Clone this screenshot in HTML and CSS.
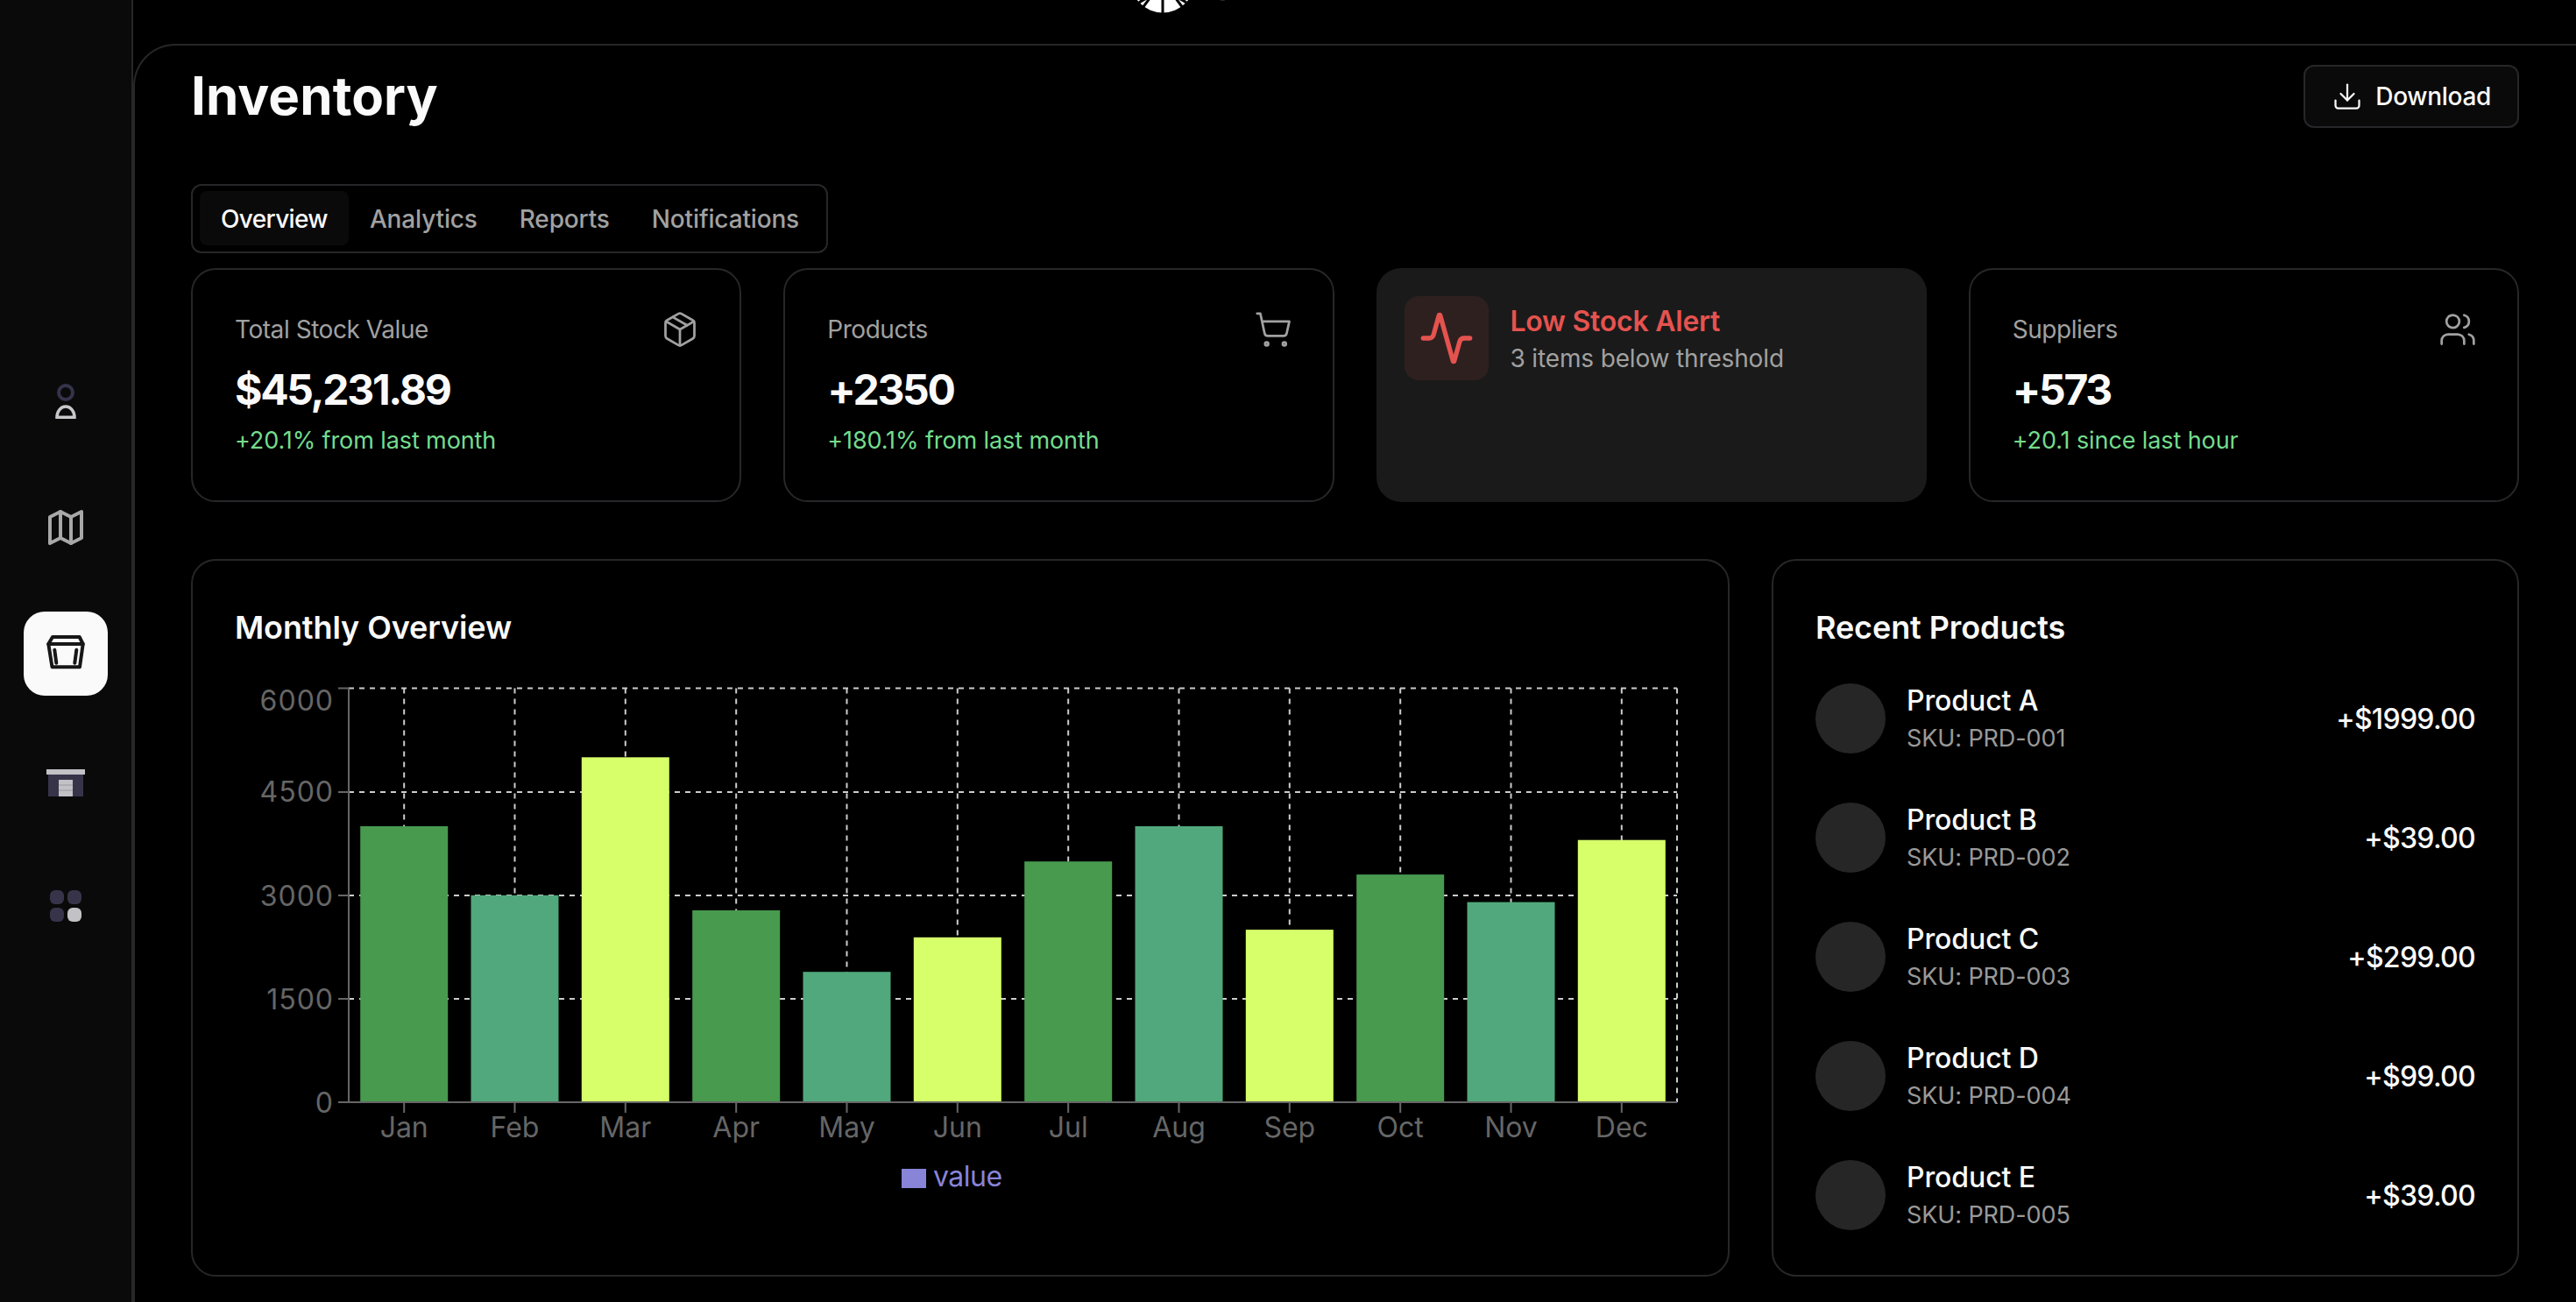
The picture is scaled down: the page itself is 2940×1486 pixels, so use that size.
FILE: index.html
```html
<!DOCTYPE html>
<html lang="en">
<head>
<meta charset="utf-8">
<title>Inventory</title>
<link rel="stylesheet" href="styles.css">
</head>
<body>
<div class="app">
  <aside class="sidebar">
    <nav class="nav">
      <a class="nav-item">
        <svg class="nav-icon" viewBox="0 0 48 48"><circle class="d-stroke" cx="24" cy="14" r="8"/><path class="l-stroke" d="M14 42.2H34C34 36 30 30 24 30S14 36 14 42.2Z"/></svg>
      </a>
      <a class="nav-item">
        <svg class="nav-icon map-icon" viewBox="0 0 24 24"><path d="M3 6l6-3 6 3 6-3v15l-6 3-6-3-6 3z"/><path d="M9 3v15"/><path d="M15 6v15"/></svg>
      </a>
      <a class="nav-item active">
        <svg class="nav-icon basket-icon" viewBox="0 0 48 48"><path d="M9 5H39.7L43.7 13L40 39.3H8.5L4.3 13Z"/><path d="M4.3 13H43.7"/><path d="M11.3 19.7L13.3 34.7"/><path d="M36.3 19.7L34.3 34.7"/></svg>
      </a>
      <a class="nav-item">
        <svg class="nav-icon" viewBox="0 0 48 48"><rect class="l-fill" x="2" y="12" width="44" height="6"/><rect class="d-fill" x="4" y="18" width="40" height="25"/><rect class="l-fill" x="16" y="24" width="16" height="19"/><path class="door-line" d="M16 30H32M16 36H32"/></svg>
      </a>
      <a class="nav-item">
        <svg class="nav-icon" viewBox="0 0 48 48"><rect class="d-fill" x="6" y="6" width="16" height="16" rx="6"/><rect class="d-fill" x="26" y="6" width="16" height="16" rx="6"/><rect class="d-fill" x="6" y="26" width="16" height="16" rx="6"/><rect class="l-fill" x="26" y="26" width="16" height="16" rx="6"/></svg>
      </a>
    </nav>
  </aside>
  <div class="main">
    <header class="topbar">
      <svg class="logo" viewBox="0 0 74 74">
        <circle class="logo-disc" cx="37" cy="37" r="36.5"/>
        <path class="logo-cuts" d="M37 37V74M37 37L14 68M37 37L60 68M37 37L2 52M37 37L72 52M10 62A36 24 0 0 1 64 62"/>
      </svg>
      <span class="brand">SHIPMONKE</span>
    </header>
    <main class="panel">
      <div class="title-row">
        <h1 class="title">Inventory</h1>
        <button class="download">
          <svg class="dl-icon" viewBox="0 0 24 24"><path d="M21 15v4a2 2 0 0 1-2 2H5a2 2 0 0 1-2-2v-4"/><path d="M7 10l5 5 5-5"/><path d="M12 15V3"/></svg>
          <span>Download</span>
        </button>
      </div>
      <div class="tabs">
        <span class="tab on">Overview</span>
        <span class="tab">Analytics</span>
        <span class="tab">Reports</span>
        <span class="tab">Notifications</span>
      </div>
      <section class="stats">
        <article class="stat">
          <div class="stat-head"><span class="stat-label">Total Stock Value</span>
            <svg class="stat-icon" viewBox="0 0 24 24"><path d="M7.5 4.27l9 5.15"/><path d="M21 8a2 2 0 0 0-1-1.73l-7-4a2 2 0 0 0-2 0l-7 4A2 2 0 0 0 3 8v8a2 2 0 0 0 1 1.73l7 4a2 2 0 0 0 2 0l7-4A2 2 0 0 0 21 16Z"/><path d="M3.3 7l8.7 5 8.7-5"/><path d="M12 22V12"/></svg>
          </div>
          <div class="stat-value">$45,231.89</div>
          <div class="stat-sub">+20.1% from last month</div>
        </article>
        <article class="stat">
          <div class="stat-head"><span class="stat-label">Products</span>
            <svg class="stat-icon" viewBox="0 0 24 24"><circle cx="8" cy="21" r="1"/><circle cx="19" cy="21" r="1"/><path d="M2.05 2.05h2l2.66 12.42a2 2 0 0 0 2 1.58h9.78a2 2 0 0 0 1.95-1.57l1.65-7.43H5.12"/></svg>
          </div>
          <div class="stat-value">+2350</div>
          <div class="stat-sub">+180.1% from last month</div>
        </article>
        <article class="alert">
          <div class="alert-box">
            <svg class="alert-icon" viewBox="0 0 24 24"><path d="M22 12h-2.48a2 2 0 0 0-1.93 1.46l-2.35 8.36a.25.25 0 0 1-.48 0L9.24 2.18a.25.25 0 0 0-.48 0l-2.35 8.36A2 2 0 0 1 4.49 12H2"/></svg>
          </div>
          <div class="alert-text">
            <div class="alert-title">Low Stock Alert</div>
            <div class="alert-sub">3 items below threshold</div>
          </div>
        </article>
        <article class="stat">
          <div class="stat-head"><span class="stat-label">Suppliers</span>
            <svg class="stat-icon" viewBox="0 0 24 24"><path d="M16 21v-2a4 4 0 0 0-4-4H6a4 4 0 0 0-4 4v2"/><circle cx="9" cy="7" r="4"/><path d="M22 21v-2a4 4 0 0 0-3-3.87"/><path d="M16 3.13a4 4 0 0 1 0 7.75"/></svg>
          </div>
          <div class="stat-value">+573</div>
          <div class="stat-sub">+20.1 since last hour</div>
        </article>
      </section>
      <section class="lower">
        <article class="card">
          <h2 class="card-title">Monthly Overview</h2>
          <svg class="chart" viewBox="268 760 1656 647">
            <g class="grid">
              <path d="M398 785.5H1914M398 904H1914M398 1022H1914M398 1140H1914"/>
              <path d="M461.2 785.5V1258M587.5 785.5V1258M713.8 785.5V1258M840.2 785.5V1258M966.5 785.5V1258M1092.8 785.5V1258M1219.2 785.5V1258M1345.5 785.5V1258M1471.8 785.5V1258M1598.2 785.5V1258M1724.5 785.5V1258M1850.8 785.5V1258M1914 785.5V1258"/>
            </g>
            <g>
              <rect class="b1" x="411.2" y="943" width="100" height="315"/>
              <rect class="b2" x="537.5" y="1021.8" width="100" height="236.2"/>
              <rect class="b3" x="663.8" y="864.3" width="100" height="393.7"/>
              <rect class="b1" x="790.2" y="1039" width="100" height="219"/>
              <rect class="b2" x="916.5" y="1109.2" width="100" height="148.8"/>
              <rect class="b3" x="1042.8" y="1069.8" width="100" height="188.2"/>
              <rect class="b1" x="1169.2" y="983.2" width="100" height="274.8"/>
              <rect class="b2" x="1295.5" y="943" width="100" height="315"/>
              <rect class="b3" x="1421.8" y="1061.1" width="100" height="196.9"/>
              <rect class="b1" x="1548.2" y="998.1" width="100" height="259.9"/>
              <rect class="b2" x="1674.5" y="1029.6" width="100" height="228.4"/>
              <rect class="b3" x="1800.8" y="958.7" width="100" height="299.3"/>
            </g>
            <path class="axis" d="M386 785.5H398M398 785.5V1258M386 904H398M386 1022H398M386 1140H398M386 1258H1914M461.2 1258V1270M587.5 1258V1270M713.8 1258V1270M840.2 1258V1270M966.5 1258V1270M1092.8 1258V1270M1219.2 1258V1270M1345.5 1258V1270M1471.8 1258V1270M1598.2 1258V1270M1724.5 1258V1270M1850.8 1258V1270"/>
            <g class="y-labels">
              <text x="381" y="811">6000</text>
              <text x="381" y="915">4500</text>
              <text x="381" y="1034">3000</text>
              <text x="381" y="1152">1500</text>
              <text x="381" y="1270">0</text>
            </g>
            <g class="x-labels">
              <text x="461.2" y="1298">Jan</text>
              <text x="587.5" y="1298">Feb</text>
              <text x="713.8" y="1298">Mar</text>
              <text x="840.2" y="1298">Apr</text>
              <text x="966.5" y="1298">May</text>
              <text x="1092.8" y="1298">Jun</text>
              <text x="1219.2" y="1298">Jul</text>
              <text x="1345.5" y="1298">Aug</text>
              <text x="1471.8" y="1298">Sep</text>
              <text x="1598.2" y="1298">Oct</text>
              <text x="1724.5" y="1298">Nov</text>
              <text x="1850.8" y="1298">Dec</text>
            </g>
            <rect class="legend-mark" x="1029" y="1334" width="28" height="22"/>
            <text class="legend-text" x="1065" y="1354">value</text>
          </svg>
        </article>
        <article class="card">
          <h2 class="card-title">Recent Products</h2>
          <ul class="products">
            <li class="product"><span class="thumb"></span><div class="p-info"><div class="p-name">Product A</div><div class="p-sku">SKU: PRD-001</div></div><span class="p-price">+$1999.00</span></li>
            <li class="product"><span class="thumb"></span><div class="p-info"><div class="p-name">Product B</div><div class="p-sku">SKU: PRD-002</div></div><span class="p-price">+$39.00</span></li>
            <li class="product"><span class="thumb"></span><div class="p-info"><div class="p-name">Product C</div><div class="p-sku">SKU: PRD-003</div></div><span class="p-price">+$299.00</span></li>
            <li class="product"><span class="thumb"></span><div class="p-info"><div class="p-name">Product D</div><div class="p-sku">SKU: PRD-004</div></div><span class="p-price">+$99.00</span></li>
            <li class="product"><span class="thumb"></span><div class="p-info"><div class="p-name">Product E</div><div class="p-sku">SKU: PRD-005</div></div><span class="p-price">+$39.00</span></li>
          </ul>
        </article>
      </section>
    </main>
  </div>
</div>
</body>
</html>
```

FILE: styles.css
```css
* { box-sizing: border-box; }
html, body { margin: 0; height: 100%; }
body { background: #000; color: #fafafa; font-family: Inter, "Liberation Sans", sans-serif; overflow: hidden; }
.app { display: flex; height: 1486px; overflow: hidden; }

.sidebar { width: 152px; flex: none; background: #0a0a0a; border-right: 2px solid #27272a; }
.nav { display: flex; flex-direction: column; align-items: center; gap: 48px; padding-top: 410px; }
.nav-item { width: 96px; height: 96px; display: flex; align-items: center; justify-content: center; border-radius: 24px; }
.nav-item.active { background: #fafafa; }
.nav-icon { width: 48px; height: 48px; display: block; }
.d-stroke { fill: none; stroke: #35334a; stroke-width: 4; }
.l-stroke { fill: none; stroke: #c8c8cc; stroke-width: 3.5; }
.d-fill { fill: #37344a; }
.l-fill { fill: #c2c2c6; }
.door-line { stroke: #a8a8ac; stroke-width: 1.5; fill: none; }
.map-icon path { fill: none; stroke: #a8a8a8; stroke-width: 2; stroke-linejoin: round; stroke-linecap: round; }
.basket-icon path { fill: none; stroke: #171717; stroke-width: 4; stroke-linejoin: round; stroke-linecap: round; }

.main { flex: 1; min-width: 0; display: flex; flex-direction: column; }
.topbar { height: 50px; flex: none; overflow: hidden; display: flex; align-items: flex-end; padding: 0 0 35px 1138px; gap: 18px; }
.logo { width: 74px; height: 74px; flex: none; }
.logo-disc { fill: #fff; }
.logo-cuts { fill: none; stroke: #000; stroke-width: 3; }
.brand { font-size: 40px; line-height: 1; letter-spacing: 2.5px; color: #999; margin-bottom: 9px; white-space: nowrap; }

.panel { flex: 1; border-top: 2px solid #27272a; border-left: 2px solid #27272a; border-top-left-radius: 48px; padding: 22px 65px 0 64px; }
.title-row { display: flex; justify-content: space-between; align-items: center; height: 72px; }
.title { margin: 0 0 2px; font-size: 60px; line-height: 72px; font-weight: 700; letter-spacing: 0.1px; }
.download { height: 72px; display: flex; align-items: center; gap: 14px; padding: 0 30px; background: #0a0a0a; color: #fafafa; border: 2px solid #27272a; border-radius: 12px; font: 500 28px/40px Inter, sans-serif; letter-spacing: -0.3px; }
.dl-icon { width: 36px; height: 36px; fill: none; stroke: #fafafa; stroke-width: 1.5; stroke-linecap: round; stroke-linejoin: round; }

.tabs { display: inline-flex; margin-top: 64px; height: 79px; padding: 6px 7px 7px 8px; border: 2px solid #27272a; border-radius: 12px; }
.tab { padding: 0 24px; font-size: 28px; font-weight: 500; line-height: 64px; letter-spacing: -0.15px; color: #a1a1a1; border-radius: 8px; }
.tab.on { background: #0a0a0a; color: #fafafa; letter-spacing: -0.65px; }

.stats { display: grid; grid-template-columns: repeat(4, 1fr); gap: 48px; margin-top: 17px; height: 267px; }
.stat { border: 2px solid #27272a; border-radius: 28px; padding: 48px 46px 0 48px; }
.stat-head { display: flex; justify-content: space-between; align-items: center; height: 40px; }
.stat-label { font-size: 28px; line-height: 40px; letter-spacing: -0.45px; color: #a1a1a1; }
.stat-icon { width: 44px; height: 44px; fill: none; stroke: #a1a1a1; stroke-width: 1.5; stroke-linecap: round; stroke-linejoin: round; }
.stat-value { margin-top: 21px; font-size: 48px; line-height: 56px; font-weight: 700; letter-spacing: -2.3px; }
.stat-sub { margin-top: 12px; font-size: 27px; line-height: 36px; letter-spacing: -0.1px; color: #74dc8c; }
.alert { display: flex; gap: 25px; align-items: flex-start; background: #1a1a1a; border-radius: 28px; padding: 32px; }
.alert-box { width: 96px; height: 96px; flex: none; display: flex; align-items: center; justify-content: center; background: #2f2020; border-radius: 16px; }
.alert-icon { width: 64px; height: 64px; fill: none; stroke: #e5534f; stroke-width: 2; stroke-linecap: round; stroke-linejoin: round; }
.alert-text { padding-top: 8px; }
.alert-title { font-size: 32px; line-height: 42px; font-weight: 600; letter-spacing: -0.25px; color: #e5534f; }
.alert-sub { font-size: 28px; line-height: 42px; letter-spacing: -0.15px; color: #a1a1a1; }

.lower { display: grid; grid-template-columns: 1756fr 853fr; gap: 48px; margin-top: 65px; height: 819px; }
.card { border: 2px solid #27272a; border-radius: 28px; padding: 48px; min-width: 0; }
.card-title { margin: 0; font-size: 36px; line-height: 56px; font-weight: 600; letter-spacing: -0.1px; }
.chart { display: block; width: 1656px; height: 647px; margin-top: 16px; }
.grid path { fill: none; stroke: #ccc; stroke-width: 2; stroke-dasharray: 6 6; }
.axis { fill: none; stroke: #666; stroke-width: 2; }
.b1 { fill: #489a4e; }
.b2 { fill: #50a87c; }
.b3 { fill: #d6ff6a; }
.y-labels text { text-anchor: end; font-size: 32px; letter-spacing: 1px; fill: #666; }
.x-labels text { text-anchor: middle; font-size: 32px; fill: #666; }
.legend-mark { fill: #8884d8; }
.legend-text { font-size: 32px; letter-spacing: -0.5px; fill: #8884d8; }

.products { list-style: none; margin: 36px 0 0; padding: 0; display: flex; flex-direction: column; gap: 56px; }
.product { display: flex; align-items: center; height: 80px; gap: 24px; }
.thumb { width: 80px; height: 80px; border-radius: 50%; background: #262626; flex: none; }
.p-info { flex: 1; }
.p-name { font-size: 32px; line-height: 46px; font-weight: 500; letter-spacing: -0.1px; }
.p-sku { font-size: 27px; line-height: 40px; letter-spacing: -0.1px; color: #999; }
.p-price { font-size: 32px; font-weight: 500; letter-spacing: -0.7px; }
```
